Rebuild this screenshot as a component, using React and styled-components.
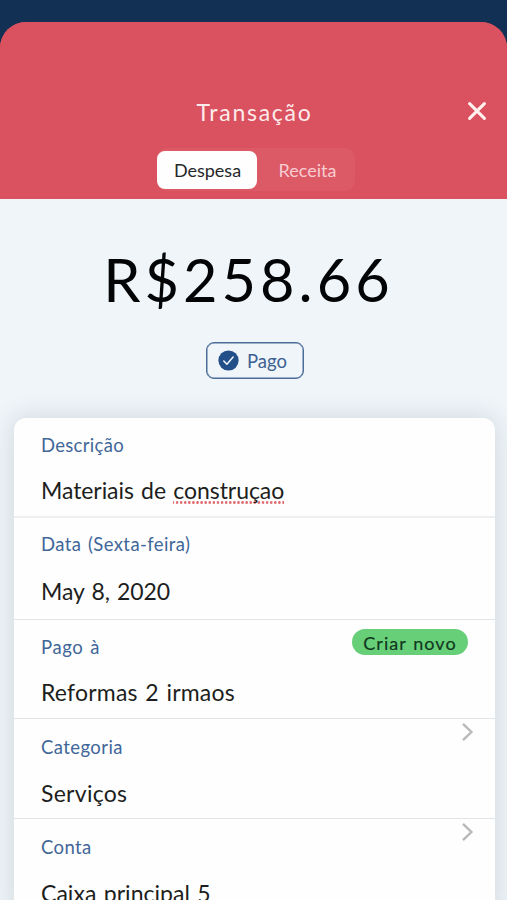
import React from "react";
import styled, { createGlobalStyle } from "styled-components";

const Global = createGlobalStyle`
  * { box-sizing: border-box; }
  html, body { margin: 0; background: #122f54; }
  body { overflow: hidden; font-family: Lato, "Open Sans", sans-serif; }
`;

const Screen = styled.div`
  width: 507px;
  height: 900px;
  padding-top: 21.5px;
  overflow: hidden;
  background: #122f54;
`;

const Sheet = styled.main`
  height: 100%;
  display: flex;
  flex-direction: column;
  overflow: hidden;
  border-radius: 26px 26px 0 0;
  background: linear-gradient(#da515f 100px, #eff5f9 100px);
`;

const Header = styled.header`
  flex: none;
  height: 177.5px;
  display: flex;
  flex-direction: column;
  align-items: center;
  padding-top: 72.5px;
  background: #da515f;
`;

const TitleBar = styled.div`
  width: 100%;
  height: 32px;
  display: grid;
  grid-template-columns: 60px 1fr 60px;
  align-items: center;
`;

const Title = styled.h1`
  grid-column: 2;
  margin: 0;
  padding: 2px 0 0 2px;
  text-align: center;
  font-size: 23px;
  line-height: 32px;
  font-weight: 400;
  letter-spacing: 1.72px;
  color: #fdebeb;
`;

const IconButton = styled.button`
  width: 60px;
  height: 32px;
  padding: 0;
  display: flex;
  align-items: center;
  justify-content: center;
  border: 0;
  background: none;
`;

const Tabs = styled.div`
  display: flex;
  align-items: center;
  width: 198px;
  height: 43px;
  margin: 22px 0 0 5px;
  border-radius: 10px;
  background: #dc5966;
`;

const Tab = styled.button`
  width: ${({ $active }) => ($active ? 100 : 98)}px;
  height: 38px;
  padding: 1px 0 0 ${({ $active }) => ($active ? 1 : 3)}px;
  border: 0;
  border-radius: 8px;
  background: ${({ $active }) => ($active ? "#fefefe" : "transparent")};
  color: ${({ $active }) => ($active ? "#252629" : "#f8cdd1")};
  font: 400 18px/37px Lato, "Open Sans", sans-serif;
`;

const Summary = styled.section`
  flex: none;
  height: 219px;
  display: flex;
  flex-direction: column;
  align-items: center;
  padding-top: 45px;
`;

const Amount = styled.div`
  margin-left: -10px;
  font-size: 59.5px;
  line-height: 70px;
  letter-spacing: 4px;
  white-space: nowrap;
  color: #030405;
`;

const Status = styled.button`
  width: 98px;
  height: 37px;
  margin: 27.5px 0 0 3px;
  padding: 0 0 0 11px;
  display: flex;
  align-items: center;
  gap: 8px;
  border: 1.5px solid #4a6c96;
  border-radius: 8px;
  background: transparent;
  color: #3d6092;
  box-shadow: inset 0 0 0 0.5px #4a6c96;
  font: 400 18.5px/34px Lato, "Open Sans", sans-serif;
`;

const StatusText = styled.span`
  padding-top: 2px;
`;

const Card = styled.section`
  flex: none;
  margin: 0 12px 0 14px;
  border-radius: 12px 12px 0 0;
  background: #fefefe;
  box-shadow: 0 0 26px 2px rgba(30, 40, 50, 0.13);
`;

const Row = styled.div`
  display: flex;
  justify-content: space-between;
  align-items: flex-start;
  height: ${({ $height }) => $height}px;
  padding-left: 27px;
  border-bottom: ${({ $soft }) => ($soft ? "2px solid #eeeff1" : "1px solid #e2e4e7")};
`;

const Field = styled.div`
  display: flex;
  flex-direction: column;
  gap: ${({ $gap }) => $gap || 19}px;
  padding-top: ${({ $top }) => $top || 15}px;
`;

const Label = styled.span`
  font-size: 18.5px;
  line-height: 24px;
  white-space: nowrap;
  color: #416698;
  letter-spacing: ${({ $track }) => $track}px;
  word-spacing: 1.5px;
`;

const Value = styled.span`
  font-size: 23px;
  line-height: 30px;
  white-space: nowrap;
  color: #1d1e20;
  letter-spacing: ${({ $track }) => $track}px;
  word-spacing: 1.5px;
`;

const Misspelled = styled.span`
  display: inline-block;
  height: 29px;
  background: radial-gradient(circle, #dd6b70 1.1px, transparent 1.6px) 2px 100% / 4.1px 3px repeat-x;
`;

const Badge = styled.button`
  width: 116px;
  height: 26px;
  margin: 9px 27px 0 0;
  padding: 2px 0 0;
  border: 0;
  border-radius: 13px;
  background: #68cf79;
  color: #10391d;
  font: 400 18px/24px Lato, "Open Sans", sans-serif;
  letter-spacing: 1.05px;
  word-spacing: 1px;
  -webkit-text-stroke: 0.2px #10391d;
  white-space: nowrap;
`;

const ChevronIcon = styled.svg`
  width: 14px;
  height: 20px;
  margin: 3px 20px 0 0;
`;

const CloseIcon = () => (
  <svg width="20" height="20" viewBox="0 0 20 20" fill="none" stroke="#fff1ed" strokeWidth="3.1" strokeLinecap="round">
    <path d="M2.6 2.6 17.4 17.4M17.4 2.6 2.6 17.4" />
  </svg>
);

const CheckIcon = () => (
  <svg width="21" height="21" viewBox="0 0 21 21" fill="none">
    <circle cx="10.5" cy="10.5" r="10.1" fill="#234f89" />
    <path d="m5.8 11 3.1 3.2 6.2-7.2" stroke="#eaf2f9" strokeWidth="1.6" strokeLinecap="round" strokeLinejoin="round" />
  </svg>
);

const Chevron = () => (
  <ChevronIcon viewBox="0 0 14 20" fill="none" stroke="#b9b9bb" strokeWidth="2.4">
    <path d="m2 1.8 8.4 8.2L2 18.2" />
  </ChevronIcon>
);

const rows = [
  { label: "Descrição", labelTrack: 0.3, value: "Materiais de ", flagged: "construçao", track: -0.07, height: 100, gap: 18, soft: true },
  { label: "Data (Sexta-feira)", labelTrack: 0.4, value: "May 8, 2020", track: -0.1, height: 102, top: 14, gap: 20 },
  { label: "Pago à", labelTrack: 0.6, value: "Reformas 2 irmaos", track: 0.2, height: 99, gap: 18, action: "badge" },
  { label: "Categoria", labelTrack: 0.42, value: "Serviços", track: 0.28, height: 100, top: 16, action: "chevron" },
  { label: "Conta", labelTrack: 0.4, value: "Caixa principal 5", track: 0.03, height: 100, top: 16, action: "chevron" },
];

export default function App() {
  return (
    <>
      <Global />
      <Screen>
        <Sheet>
          <Header>
            <TitleBar>
              <Title>Transação</Title>
              <IconButton aria-label="Fechar"><CloseIcon /></IconButton>
            </TitleBar>
            <Tabs>
              <Tab $active>Despesa</Tab>
              <Tab>Receita</Tab>
            </Tabs>
          </Header>
          <Summary>
            <Amount>R$258.66</Amount>
            <Status>
              <CheckIcon />
              <StatusText>Pago</StatusText>
            </Status>
          </Summary>
          <Card>
            {rows.map((r) => (
              <Row key={r.label} $height={r.height} $soft={r.soft}>
                <Field $top={r.top} $gap={r.gap}>
                  <Label $track={r.labelTrack}>{r.label}</Label>
                  <Value $track={r.track}>
                    {r.value}
                    {r.flagged && <Misspelled>{r.flagged}</Misspelled>}
                  </Value>
                </Field>
                {r.action === "badge" && <Badge>Criar novo</Badge>}
                {r.action === "chevron" && <Chevron />}
              </Row>
            ))}
          </Card>
        </Sheet>
      </Screen>
    </>
  );
}
